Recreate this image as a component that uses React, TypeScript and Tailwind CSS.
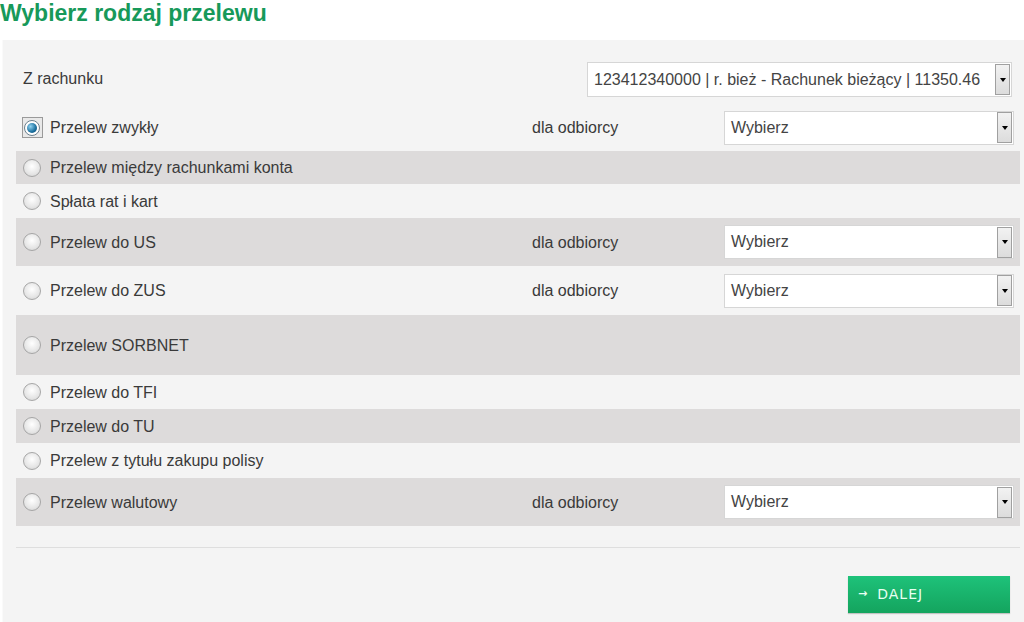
import React, { useState } from "react";

type Opt = { id: string; label: string; h: string; gray: boolean; recipient?: boolean };

const options: Opt[] = [
  { id: "zwykly", label: "Przelew zwykły", h: "h-[47px]", gray: false, recipient: true },
  { id: "miedzy", label: "Przelew między rachunkami konta", h: "h-[33px]", gray: true },
  { id: "splata", label: "Spłata rat i kart", h: "h-[34px]", gray: false },
  { id: "us", label: "Przelew do US", h: "h-[48px]", gray: true, recipient: true },
  { id: "zus", label: "Przelew do ZUS", h: "h-[49px]", gray: false, recipient: true },
  { id: "sorbnet", label: "Przelew SORBNET", h: "h-[60px]", gray: true },
  { id: "tfi", label: "Przelew do TFI", h: "h-[34px]", gray: false },
  { id: "tu", label: "Przelew do TU", h: "h-[34px]", gray: true },
  { id: "polisa", label: "Przelew z tytułu zakupu polisy", h: "h-[35px]", gray: false },
  { id: "walutowy", label: "Przelew walutowy", h: "h-[48px]", gray: true, recipient: true },
];

function FakeSelect({ value, className }: { value: string; className: string }) {
  return (
    <div className={`flex items-center bg-white border border-[#d6d6d6] ${className}`}>
      <span className="flex-1 pl-[6px] text-[16px] text-[#444] truncate">{value}</span>
      <span className="flex items-center justify-center w-[15px] h-[31px] mr-[1px] border border-[#a0a0a0] bg-gradient-to-b from-[#f2f2f2] to-[#dcdcdc]">
        <span className="w-0 h-0 border-l-[3px] border-r-[3px] border-t-[4px] border-l-transparent border-r-transparent border-t-black" />
      </span>
    </div>
  );
}

function Radio({ checked }: { checked: boolean }) {
  if (checked) {
    return (
      <span className="flex items-center justify-center w-[21px] h-[21px] border border-[#9a9a9a] bg-[#e9e9e9]">
        <span className="flex items-center justify-center w-[16px] h-[16px] rounded-full border border-[#6b7f8c] bg-white">
          <span className="w-[10px] h-[10px] rounded-full bg-[radial-gradient(circle_at_35%_35%,#8fd2f0,#1a6f9e_60%,#0d4466)]" />
        </span>
      </span>
    );
  }
  return (
    <span className="w-[18px] h-[18px] rounded-full border border-[#a6a6a6] bg-[radial-gradient(circle_at_50%_40%,#ffffff,#e6e6e6_60%,#cfcfcf)]" />
  );
}

export default function App() {
  const [selected, setSelected] = useState("zwykly");

  return (
    <div className="w-[1024px] h-[622px] overflow-hidden bg-white font-['Liberation_Sans',Arial,sans-serif] text-[#3a3a3a]">
      <h1 className="h-[40px] text-[23px] leading-[27px] font-bold text-[#17995a]">Wybierz rodzaj przelewu</h1>

      <div className="ml-[2px] h-[582px] bg-[#f4f4f4] border-l border-[#fafafa] pl-[13px] pr-[4px]">
        <div className="flex items-start h-[64px] pt-[22px]">
          <span className="pl-[7px] flex-1 text-[16px] leading-[34px]">Z rachunku</span>
          <FakeSelect value="123412340000 | r. bież - Rachunek bieżący | 11350.46" className="w-[425px] h-[35px] mr-[8px]" />
        </div>

        {options.map((o) => (
          <div
            key={o.id}
            onClick={() => setSelected(o.id)}
            className={`flex items-center ${o.h} ${o.gray ? "bg-[#dddbdb]" : ""}`}
          >
            <span className="w-[34px] flex justify-center pr-[2px]">
              <Radio checked={selected === o.id} />
            </span>
            <span className="w-[482px] text-[16px] pt-[1px]">{o.label}</span>
            {o.recipient && (
              <>
                <span className="w-[192px] text-[16px] pt-[1px]">dla odbiorcy</span>
                <FakeSelect value="Wybierz" className="w-[290px] h-[34px]" />
              </>
            )}
          </div>
        ))}

        <div className="mt-[21px] border-t border-[#dedede]" />

        <div className="flex justify-end pt-[28px] pr-[10px]">
          <button className="flex items-center gap-[9px] w-[162px] h-[37px] pl-[10px] bg-gradient-to-b from-[#1ec27a] to-[#14a45e] text-[#e8fff2] text-[14px] tracking-[1px] font-['DejaVu_Sans',sans-serif] shadow-[0_1px_1px_rgba(0,0,0,0.2)]">
            <span className="text-[11px] font-bold">→</span>
            <span>DALEJ</span>
          </button>
        </div>
      </div>
    </div>
  );
}
